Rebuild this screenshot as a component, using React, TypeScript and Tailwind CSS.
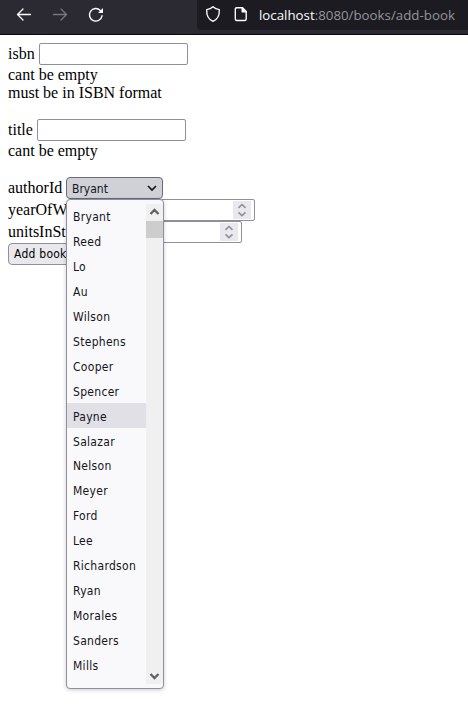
import React from "react";

const authors = [
  "Bryant", "Reed", "Lo", "Au", "Wilson", "Stephens", "Cooper", "Spencer", "Payne", "Salazar",
  "Nelson", "Meyer", "Ford", "Lee", "Richardson", "Ryan", "Morales", "Sanders", "Mills",
];

function Toolbar() {
  return (
    <header className="flex h-[35px] border-b border-[#0c0c0d] bg-[#2b2a33] font-['Open_Sans','Noto_Sans',sans-serif]">
      <nav className="flex h-[30px] w-[197px] shrink-0 items-center pl-4">
        <svg width="16" height="16" viewBox="0 0 16 16" fill="none" stroke="#fbfbfe" strokeWidth="1.3" strokeLinecap="round" strokeLinejoin="round">
          <path d="M14.5 7.5H1.5M7 2L1.5 7.5L7 13" />
        </svg>
        <svg className="ml-5" width="16" height="16" viewBox="0 0 16 16" fill="none" stroke="#77767e" strokeWidth="1.3" strokeLinecap="round" strokeLinejoin="round">
          <path d="M1.5 7.5H14.5M9 2L14.5 7.5L9 13" />
        </svg>
        <svg className="ml-5" width="16" height="16" viewBox="0 0 16 16" fill="none" stroke="#fbfbfe" strokeWidth="1.4" strokeLinecap="round">
          <path d="M12.3 3.4A6.3 6.3 0 1 0 14 8.8" />
          <path d="M15 1V6H10Z" fill="#fbfbfe" stroke="none" />
        </svg>
      </nav>
      <div className="flex h-[30px] grow items-center rounded-bl bg-[#1c1b22] pl-2">
        <svg className="overflow-visible" width="16" height="16" viewBox="0 0 16 16" fill="none" stroke="#fbfbfe" strokeWidth="1.4" strokeLinejoin="round">
          <path d="M8 -.3C6.3 1.3 4.2 2.2 1.7 2.6C1.4 7.8 3.5 12.4 8 14.4C12.5 12.4 14.6 7.8 14.3 2.6C11.8 2.2 9.7 1.3 8 -.3Z" />
        </svg>
        <svg className="ml-3" width="16" height="16" viewBox="0 0 16 16" fill="none" stroke="#fbfbfe" strokeWidth="1.4" strokeLinejoin="round">
          <path d="M3.8 .7H9.5L13.2 4.4V12Q13.2 13.5 11.7 13.5H3.8Q2.3 13.5 2.3 12V2.2Q2.3 .7 3.8 .7Z" />
          <path d="M9.2 .7V4.7H13.2Z" fill="#fbfbfe" />
        </svg>
        <span className="ml-[10px] whitespace-nowrap text-[13.3px] leading-5 text-[#96959d]">
          <span className="text-[#fbfbfe]">localhost</span>:8080/books/add-book
        </span>
      </div>
    </header>
  );
}

function Spinner() {
  return (
    <span className="flex h-[18px] w-[18px] items-center justify-center bg-[#e9e9ed]">
      <svg width="10" height="14" viewBox="0 0 10 14" fill="none" stroke="#8f8f9d" strokeWidth="1.6">
        <path d="M1.5 4.8L5 1.5L8.5 4.8M1.5 9.4L5 12.7L8.5 9.4" />
      </svg>
    </span>
  );
}

function Popup() {
  return (
    <div className="absolute -left-px top-[21px] z-10 flex h-[490px] w-[98px] rounded border border-[#8f8f9d] bg-[#f9f9fb] py-1 shadow-[0_1px_4px_rgba(0,0,0,0.2)]">
      <ul className="-mt-[0.6px] w-[79px] tracking-[0.3px]">
        {authors.map((name) => (
          <li key={name} className={`flex h-[24.95px] items-center pl-[6px] pt-[2.46px] ${name === "Payne" ? "bg-[#e0e0e6]" : ""}`}>
            {name}
          </li>
        ))}
      </ul>
      <div className="flex w-[17px] flex-col bg-[#f0f0f0]">
        <svg width="17" height="17" viewBox="0 0 17 17" fill="none" stroke="#606060" strokeWidth="2.3">
          <path d="M4.5 10L8.5 6L12.5 10" />
        </svg>
        <div className="h-[17px] bg-[#cdcdcd]" />
        <svg className="mt-auto" width="17" height="17" viewBox="0 0 17 17" fill="none" stroke="#606060" strokeWidth="2.3">
          <path d="M4.5 7L8.5 11L12.5 7" />
        </svg>
      </div>
    </div>
  );
}

export default function App() {
  return (
    <div className="h-[704px] w-[468px] overflow-hidden bg-white text-black">
      <Toolbar />
      <main className="px-2 pt-2 font-['Liberation_Serif',serif] text-base leading-[18px]">
        <div className="flex h-[22px] items-center">
          <label className="w-[31px]">isbn</label>
          <input className="h-[22px] w-[149px] rounded-[2px] border border-[#8f8f9d] bg-white" />
        </div>
        <p className="pt-px">cant be empty</p>
        <p>must be in ISBN format</p>
        <div className="mt-[17px] flex h-[22px] items-center">
          <label className="w-[29px]">title</label>
          <input className="h-[22px] w-[149px] rounded-[2px] border border-[#8f8f9d] bg-white" />
        </div>
        <p className="pt-px">cant be empty</p>
        <div className="mt-[17px] flex h-[22px] items-center">
          <label className="w-[58px]">authorId</label>
          <div className="relative flex h-[22px] w-[97px] items-center justify-between rounded border border-[#6a6a78] bg-[#d0d0d7] pl-[5px] pr-[5px] font-['DejaVu_Sans_Condensed','Noto_Sans',sans-serif] text-xs text-[#15141a]">
            <span className="pt-px">Bryant</span>
            <svg width="10" height="8" viewBox="0 0 10 8" fill="none" stroke="#15141a" strokeWidth="1.7">
              <path d="M1 2L5 6L9 2" />
            </svg>
            <Popup />
          </div>
        </div>
        <div className="flex h-[22px] items-center">
          <label className="w-[98px]">yearOfW</label>
          <div className="flex h-[22px] w-[149px] items-center justify-end rounded-[2px] border border-[#8f8f9d] bg-white pr-[3px]">
            <Spinner />
          </div>
        </div>
        <div className="flex h-[22px] items-center">
          <label className="w-[85px]">unitsInSt</label>
          <div className="flex h-[22px] w-[149px] items-center justify-end rounded-[2px] border border-[#8f8f9d] bg-white pr-[3px]">
            <Spinner />
          </div>
        </div>
        <button className="block h-[22px] w-[66px] whitespace-nowrap rounded border border-[#8f8f9d] bg-[#e9e9ed] pl-[5px] text-left font-['DejaVu_Sans_Condensed','Noto_Sans',sans-serif] text-xs leading-5 tracking-[0.25px]">
          Add book
        </button>
      </main>
    </div>
  );
}
